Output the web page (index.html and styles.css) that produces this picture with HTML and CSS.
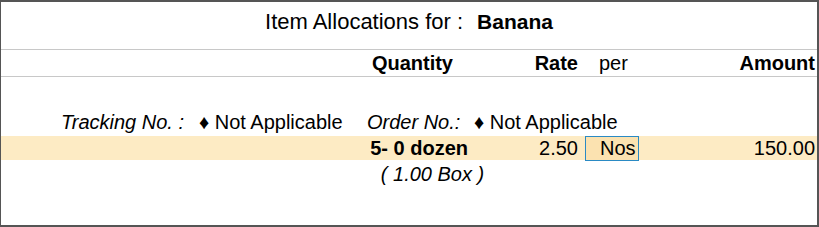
FILE: index.html
```html
<!DOCTYPE html>
<html lang="en">

<head>
    <meta charset="UTF-8">
    <title>Item Allocations</title>
    <link rel="stylesheet" href="styles.css">
</head>

<body>
    <div class="frame">
        <header class="title">
            <span>Item Allocations for :</span>
            <b>Banana</b>
        </header>
        <div class="cols head">
            <span></span>
            <span class="qty">Quantity</span>
            <span class="rate">Rate</span>
            <span class="per">per</span>
            <span class="amount">Amount</span>
        </div>
        <div class="tracking">
            <i class="label l1">Tracking No. :</i>
            <span class="value v1">&#9830; Not Applicable</span>
            <i class="label l2">Order No.:</i>
            <span class="value">&#9830; Not Applicable</span>
        </div>
        <div class="cols line">
            <span></span>
            <b class="qty">5- 0 dozen</b>
            <span class="rate">2.50</span>
            <span class="per unit">Nos</span>
            <span class="amount">150.00</span>
        </div>
        <div class="alt">( 1.00 Box )</div>
    </div>
</body>

</html>
```

FILE: styles.css
```css
html,
body {
    margin: 0;
    padding: 0;
    background: #ffffff;
}

body {
    font-family: 'Liberation Sans', Arial, sans-serif;
    color: #000000;
}

.frame {
    width: 819px;
    height: 227px;
    box-sizing: border-box;
    border: 2px solid #555555;
    border-left-width: 1px;
    overflow: hidden;
}

.title {
    height: 48px;
    box-sizing: border-box;
    display: flex;
    justify-content: center;
    align-items: center;
    gap: 14px;
    font-size: 22px;
    border-bottom: 1px solid #c8c8c8;
    padding: 0 0 7px 0;
}

.title b {
    font-size: 21px;
}

.cols {
    display: grid;
    grid-template-columns: 359px 108px 111px 56px 1fr;
    font-size: 20px;
}

.head {
    height: 26px;
    align-items: center;
    font-weight: bold;
    border-bottom: 1px solid #c8c8c8;
}

.qty,
.rate,
.amount {
    text-align: right;
}

.head .qty {
    padding-right: 15px;
}

.rate {
    padding-right: 1px;
}

.per {
    padding-left: 20px;
    font-weight: normal;
}

.amount {
    padding-right: 2px;
}

.tracking {
    margin-top: 35px;
    height: 24px;
    box-sizing: border-box;
    padding: 0 0 4px 60px;
    display: flex;
    align-items: center;
    font-size: 20px;
    white-space: nowrap;
}

.label {
    display: inline-block;
}

.l1 {
    width: 138px;
}

.v1 {
    width: 168px;
}

.l2 {
    width: 107px;
}

.line {
    height: 24px;
    align-items: center;
    background: #fdebc4;
}

.line .qty {
    padding-right: 0;
}

.unit {
    margin-left: 6px;
    padding-left: 14px;
    height: 23px;
    line-height: 23px;
    border: 1px solid #2a8ac4;
    background: #fbe2b0;
    width: 38px;
}

.alt {
    padding-left: 47px;
    text-align: center;
    font-style: italic;
    font-size: 20px;
    margin-top: 3px;
}
```
